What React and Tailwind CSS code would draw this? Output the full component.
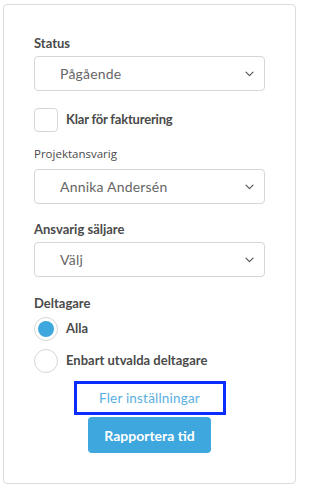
import React from 'react';

const font = { fontFamily: 'Lato, "Noto Sans", sans-serif' };

function Chevron() {
  return (
    <svg width="9" height="6" viewBox="0 0 9 6" fill="none" className="text-[#555]">
      <path d="M1 1.2l3.5 3.5L8 1.2" stroke="currentColor" strokeWidth="1.2" strokeLinecap="round" strokeLinejoin="round" />
    </svg>
  );
}

function Select({ value, className = '' }) {
  return (
    <div
      className={`h-[35px] w-full flex items-center justify-between pl-[25px] pr-[10px] border border-[#d6d6d6] rounded-[4px] bg-white ${className}`}
    >
      <span className="text-[14px] text-[#666] tracking-[0.2px]">{value}</span>
      <Chevron />
    </div>
  );
}

function Radio({ checked, label, className = '' }) {
  return (
    <div className={`flex items-center gap-[8px] ${className}`}>
      <span className="w-[24px] h-[24px] rounded-full border border-[#d6d6d6] flex items-center justify-center bg-white">
        {checked && <span className="w-[16px] h-[16px] rounded-full bg-[#3ea7dd]" />}
      </span>
      <span className="text-[13px] font-bold text-[#4a4a4a]">{label}</span>
    </div>
  );
}

export default function App() {
  return (
    <div className="w-[299px] h-[488px] bg-white pt-[4px] px-[3px]" style={font}>
      <div className="h-[480px] border border-[#dcdcdc] rounded-[4px] px-[30px] pt-[30px]">
        <div className="text-[13px] font-bold text-[#4a4a4a] leading-[16px]">Status</div>
        <Select value="Pågående" className="mt-[5px]" />

        <div className="mt-[17px] flex items-center gap-[8px]">
          <span className="w-[24px] h-[24px] rounded-[4px] border border-[#d6d6d6] bg-white" />
          <span className="text-[13px] font-bold text-[#4a4a4a] tracking-[-0.2px]">Klar för fakturering</span>
        </div>

        <div
          className="mt-[14px] text-[11.5px] text-[#4a4a4a] leading-[16px]"
          style={{ fontFamily: '"Open Sans", sans-serif' }}
        >
          Projektansvarig
        </div>
        <Select value="Annika Andersén" className="mt-[7px]" />

        <div className="mt-[17px] text-[13px] font-bold text-[#4a4a4a] leading-[16px]">Ansvarig säljare</div>
        <Select value="Välj" className="mt-[5px]" />

        <div className="mt-[18px] text-[13px] font-bold text-[#4a4a4a] leading-[16px]">Deltagare</div>
        <Radio checked label="Alla" className="mt-[6px]" />
        <Radio label="Enbart utvalda deltagare" className="mt-[8px]" />

        <div className="flex flex-col items-center mt-[8px]">
          <button className="w-[152px] h-[34px] border-[3px] border-[#0a2cff] text-[13.5px] text-[#5aafe0] bg-white tracking-[0.2px]">
            Fler inställningar
          </button>
          <button className="mt-[2px] w-[123px] h-[36px] rounded-[4px] bg-[#3ea7dd] text-white text-[14px] font-bold">
            Rapportera tid
          </button>
        </div>
      </div>
    </div>
  );
}
